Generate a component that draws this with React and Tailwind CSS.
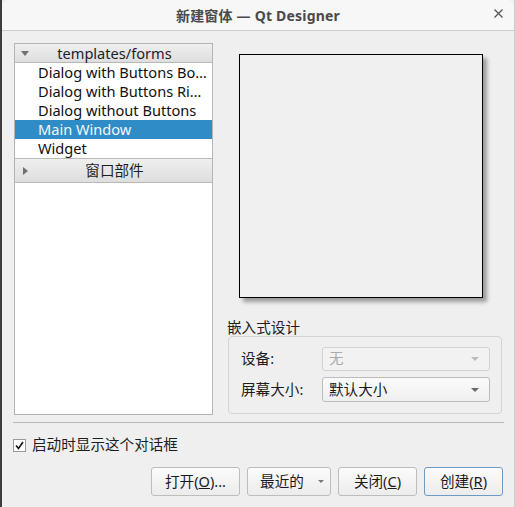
import React from 'react'

const font = { fontFamily: '"Noto Sans", "Noto Sans CJK SC", sans-serif' }

function Header({ open, label, tall }) {
  return (
    <div className={'flex items-center bg-gradient-to-b from-[#efefef] to-[#dedede] border-b border-[#b9b9b9] text-[14.6px] text-[#1e1e1e] ' + (tall ? 'h-[24px]' : 'h-[19px]')}>
      <div className="w-[20px] flex justify-center text-[#6c6c6c]">
        {open ? (
          <svg width="8" height="5" viewBox="0 0 8 5"><path d="M0 0h8L4 5z" fill="#707070" /></svg>
        ) : (
          <svg width="5" height="8" viewBox="0 0 5 8"><path d="M0 0v8l5-4z" fill="#707070" /></svg>
        )}
      </div>
      <div className="flex-1 text-center leading-none pr-[18px]">{label}</div>
    </div>
  )
}

function Item({ label, selected }) {
  return (
    <div className={'h-[19px] flex items-center pl-[23px] text-[14.6px] leading-none whitespace-nowrap ' + (selected ? 'bg-[#308cc6] text-[#f0f6fb]' : 'text-[#111]')}>
      {label}
    </div>
  )
}

function Arrow() {
  return <svg width="8" height="4" viewBox="0 0 8 4"><path d="M0 0h8L4 4z" fill="#6a6a6a" /></svg>
}

function Button({ children, wide, def, menu }) {
  return (
    <button className={'h-[29px] rounded-[3px] border bg-gradient-to-b from-[#fbfbfb] to-[#ececec] text-[14.6px] text-[#1b1b1b] flex items-center justify-center relative ' + (def ? 'border-[#6e9bc6]' : 'border-[#bdbdbd]') + ' ' + wide}>
      {children}
      {menu && (
        <span className="absolute right-[6px] top-[12px]">
          <svg width="6" height="3" viewBox="0 0 6 3"><path d="M0 0h6L3 3z" fill="#7a7a7a" /></svg>
        </span>
      )}
    </button>
  )
}

export default function App() {
  return (
    <div className="w-[515px] h-[507px] bg-[#efefef] flex flex-col border-l-2 border-l-[#3d3d3d] border-r border-r-[#cfcfcf] overflow-hidden" style={font}>
      <div className="h-[31px] bg-[#f7f7f7] border-b border-[#cdcdcd] relative flex items-center justify-center rounded-t-[6px]">
        <span className="text-[14px] font-bold text-[#4a4a4a] tracking-[0.2px]">新建窗体 — Qt Designer</span>
        <svg className="absolute right-[11px] top-[9px]" width="9" height="9" viewBox="0 0 9 9">
          <path d="M0.5 0.5l8 8M8.5 0.5l-8 8" stroke="#555" strokeWidth="1.3" />
        </svg>
      </div>

      <div className="flex pl-[12px] pt-[12px] gap-[15px]">
        <div className="w-[199px] h-[372px] bg-white border border-[#b4b4b4] flex flex-col">
          <Header open label="templates/forms" />
          <Item label="Dialog with Buttons Bo…" />
          <Item label="Dialog with Buttons Ri…" />
          <Item label="Dialog without Buttons" />
          <Item label="Main Window" selected />
          <Item label="Widget" />
          <div className="border-t border-[#b9b9b9]">
            <Header label="窗口部件" tall />
          </div>
        </div>

        <div className="w-[274px] flex flex-col">
          <div className="ml-[11px] mt-[11px] w-[244px] h-[244px] border border-black bg-[#f0f0f0] shadow-[4px_4px_4px_rgba(0,0,0,0.35)]" />
          <div className="mt-[22px] h-[16px] -ml-[1px] text-[14.6px] leading-none text-[#1e1e1e]">嵌入式设计</div>
          <div className="h-[78px] border border-[#d4d4d4] rounded-[4px] pt-[10px] pl-[12px] flex flex-col gap-[6px]">
            <div className="flex items-center">
              <div className="w-[81px] text-[14.6px] text-[#1e1e1e]">设备:</div>
              <div className="w-[168px] h-[24px] rounded-[3px] border border-[#d2d2d2] bg-[#f2f2f2] flex items-center justify-between pl-[6px] pr-[10px]">
                <span className="text-[14.6px] text-[#ababab]">无</span>
                <svg width="8" height="4" viewBox="0 0 8 4"><path d="M0 0h8L4 4z" fill="#bdbdbd" /></svg>
              </div>
            </div>
            <div className="flex items-center">
              <div className="w-[81px] text-[14.6px] text-[#1e1e1e]">屏幕大小:</div>
              <div className="w-[168px] h-[25px] rounded-[3px] border border-[#bcbcbc] bg-gradient-to-b from-[#fbfbfb] to-[#efefef] flex items-center justify-between pl-[6px] pr-[10px]">
                <span className="text-[14.6px] text-[#1b1b1b]">默认大小</span>
                <Arrow />
              </div>
            </div>
          </div>
        </div>
      </div>

      <div className="ml-[11px] mr-[10px] mt-[7px] border-t border-[#b9b9b9]" />

      <div className="flex items-center mt-[15px] ml-[11px] h-[14px]">
        <div className="w-[13px] h-[13px] border border-[#9a9a9a] bg-white flex items-center justify-center">
          <svg width="9" height="9" viewBox="0 0 9 9"><path d="M1 4.5l2.5 3L8 1" stroke="#111" strokeWidth="1.6" fill="none" /></svg>
        </div>
        <span className="ml-[6px] text-[14.6px] text-[#1e1e1e]">启动时显示这个对话框</span>
      </div>

      <div className="flex justify-end gap-[7px] mt-[15px] mr-[11px]">
        <Button wide="w-[89px]">打开(<u>O</u>)...</Button>
        <Button wide="w-[84px] pr-[14px]" menu>最近的</Button>
        <Button wide="w-[79px]">关闭(<u>C</u>)</Button>
        <Button wide="w-[79px]" def>创建(<u>R</u>)</Button>
      </div>
    </div>
  )
}
